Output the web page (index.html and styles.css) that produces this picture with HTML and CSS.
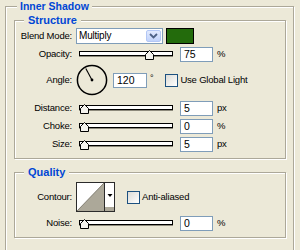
FILE: index.html
```html
<!DOCTYPE html>
<html>
<head>
<meta charset="utf-8">
<link rel="stylesheet" href="styles.css">
</head>
<body>
<div class="outer box">
  <span class="title outer-title">Inner Shadow</span>
  <div class="group structure box">
    <span class="title">Structure</span>
    <div class="row">
      <span class="lbl">Blend Mode:</span>
      <div class="select">
        <span class="select-text">Multiply</span>
        <span class="select-btn">
          <svg width="9" height="6" viewBox="0 0 9 6"><path d="M1 1 L4.5 4.5 L8 1" fill="none" stroke="#4d6185" stroke-width="1.8"/></svg>
        </span>
      </div>
      <span class="swatch"></span>
    </div>
    <div class="row">
      <span class="lbl">Opacity:</span>
      <div class="slider">
        <div class="track"></div>
        <svg class="thumb" style="left:69px" width="9" height="10" viewBox="0 0 9 10"><path d="M0.5 9.5 V4.5 L4.5 0.5 L8.5 4.5 V9.5 Z" fill="#f4f3ee" stroke="#000"/></svg>
      </div>
      <span class="field">75</span>
      <span class="unit">%</span>
    </div>
    <div class="row row-angle">
      <span class="lbl">Angle:</span>
      <svg class="dial" width="32" height="32" viewBox="0 0 32 32">
        <circle cx="16" cy="16" r="14.6" fill="none" stroke="#000" stroke-width="1.5"/>
        <line x1="16" y1="16" x2="9.8" y2="4.6" stroke="#000" stroke-width="1.1"/>
        <circle cx="16" cy="16" r="1.4" fill="#000"/>
      </svg>
      <span class="field field-angle">120</span>
      <span class="deg">°</span>
      <span class="check check-global"></span>
      <span class="check-lbl">Use Global Light</span>
    </div>
    <div class="row">
      <span class="lbl">Distance:</span>
      <div class="slider">
        <div class="track"></div>
        <svg class="thumb" style="left:4px" width="9" height="10" viewBox="0 0 9 10"><path d="M0.5 9.5 V4.5 L4.5 0.5 L8.5 4.5 V9.5 Z" fill="#f4f3ee" stroke="#000"/></svg>
      </div>
      <span class="field">5</span>
      <span class="unit">px</span>
    </div>
    <div class="row">
      <span class="lbl">Choke:</span>
      <div class="slider">
        <div class="track"></div>
        <svg class="thumb" style="left:4px" width="9" height="10" viewBox="0 0 9 10"><path d="M0.5 9.5 V4.5 L4.5 0.5 L8.5 4.5 V9.5 Z" fill="#f4f3ee" stroke="#000"/></svg>
      </div>
      <span class="field">0</span>
      <span class="unit">%</span>
    </div>
    <div class="row">
      <span class="lbl">Size:</span>
      <div class="slider">
        <div class="track"></div>
        <svg class="thumb" style="left:4px" width="9" height="10" viewBox="0 0 9 10"><path d="M0.5 9.5 V4.5 L4.5 0.5 L8.5 4.5 V9.5 Z" fill="#f4f3ee" stroke="#000"/></svg>
      </div>
      <span class="field">5</span>
      <span class="unit">px</span>
    </div>
  </div>
  <div class="group quality box">
    <span class="title">Quality</span>
    <div class="row row-contour">
      <span class="lbl">Contour:</span>
      <svg class="contour" width="39" height="30" viewBox="0 0 39 30">
        <rect x="0.5" y="0.5" width="38" height="29" fill="#fff" stroke="#2b2b2b"/>
        <polygon points="1,29 28,1 28,29" fill="#aca899"/>
        <line x1="1" y1="29" x2="28" y2="1" stroke="#6e6b5e" stroke-width="0.8"/>
        <rect x="29" y="25" width="9" height="4" fill="#aca899"/>
        <line x1="28.5" y1="1" x2="28.5" y2="29" stroke="#2b2b2b"/>
        <polygon points="31.5,12 36.5,12 34,15" fill="#000"/>
      </svg>
      <span class="check check-anti"></span>
      <span class="check-lbl">Anti-aliased</span>
    </div>
    <div class="row">
      <span class="lbl">Noise:</span>
      <div class="slider">
        <div class="track"></div>
        <svg class="thumb" style="left:4px" width="9" height="10" viewBox="0 0 9 10"><path d="M0.5 9.5 V4.5 L4.5 0.5 L8.5 4.5 V9.5 Z" fill="#f4f3ee" stroke="#000"/></svg>
      </div>
      <span class="field">0</span>
      <span class="unit">%</span>
    </div>
  </div>
</div>
</body>
</html>
```

FILE: styles.css
```css
* { box-sizing: border-box; }
html, body { margin: 0; padding: 0; }
body {
  width: 300px;
  height: 250px;
  overflow: hidden;
  padding-top: 6px;
  background: #ece9d8;
  font-family: "Liberation Sans", Arial, sans-serif;
  font-size: 9.5px;
  letter-spacing: -0.2px;
  line-height: 12px;
  color: #000;
}

.box {
  position: relative;
  border: 1px solid #aca899;
  box-shadow: inset 1px 1px #fff, 1px 1px #fff;
}
.outer {
  margin-left: 5px;
  width: 289px;
  height: 244px;
  border-bottom-width: 0;
  padding: 7px 7px 0 8px;
}
.title {
  position: absolute;
  top: -7px;
  left: 9px;
  font-size: 11px;
  font-weight: bold;
  letter-spacing: 0;
  line-height: 13px;
  color: #0046d5;
  background: #ece9d8;
  padding: 0 4px;
}
.outer-title { left: 11px; padding: 0 3px; font-size: 10.5px; }

.group { width: 272px; }
.structure { margin-top: 6px; padding: 7px 0 6px 0; }
.quality { margin-top: 13px; padding: 9px 0 6px 0; }

.row {
  display: flex;
  align-items: center;
  height: 16px;
  margin-bottom: 2px;
}
.row:last-child { margin-bottom: 0; }
.row-angle { height: 32px; margin-top: 2px; margin-bottom: 4px; }
.row-contour { height: 30px; margin-bottom: 3px; }

.lbl {
  width: 57px;
  text-align: right;
  margin-right: 4px;
  flex: none;
}

.select {
  width: 87px;
  height: 16px;
  border: 1px solid #7f9db9;
  background: #fff;
  display: flex;
  align-items: center;
  justify-content: space-between;
  padding: 0 1px 0 2px;
  font-size: 10px;
}
.select-btn {
  width: 15px;
  height: 12px;
  border: 1px solid #b3c7f5;
  border-radius: 2px;
  background: linear-gradient(#e2eafe, #c1d3fb);
  display: flex;
  align-items: center;
  justify-content: center;
}
.swatch {
  width: 28px;
  height: 16px;
  margin-left: 3px;
  border: 1px solid #000;
  background: #236b0c;
}

.slider {
  position: relative;
  width: 97px;
  height: 16px;
  flex: none;
}
.track {
  margin: 5px 0 0 3px;
  height: 5px;
  border: 1px solid #000;
  background: #fff;
  box-shadow: 0 1px #8d8a7c;
}
.thumb { position: absolute; top: 4px; }

.field {
  width: 33px;
  height: 15px;
  margin-left: 7px;
  border: 1px solid #7f9db9;
  background: #fff;
  padding: 0 3px;
  line-height: 13px;
  font-size: 10.5px;
  letter-spacing: 0;
  flex: none;
}
.unit { margin-left: 4px; }

.dial { flex: none; }
.field-angle { margin-left: 5px; width: 34px; }
.deg { align-self: flex-start; margin: 8px 0 0 3px; font-size: 9px; }

.check {
  width: 13px;
  height: 13px;
  border: 1px solid #1c5180;
  background: linear-gradient(135deg, #dcdcd7, #fff);
  flex: none;
}
.check-global { margin-left: 12px; }
.check-anti { margin-left: 12px; }
.check-lbl { margin-left: 2px; }

.contour { flex: none; }
```
